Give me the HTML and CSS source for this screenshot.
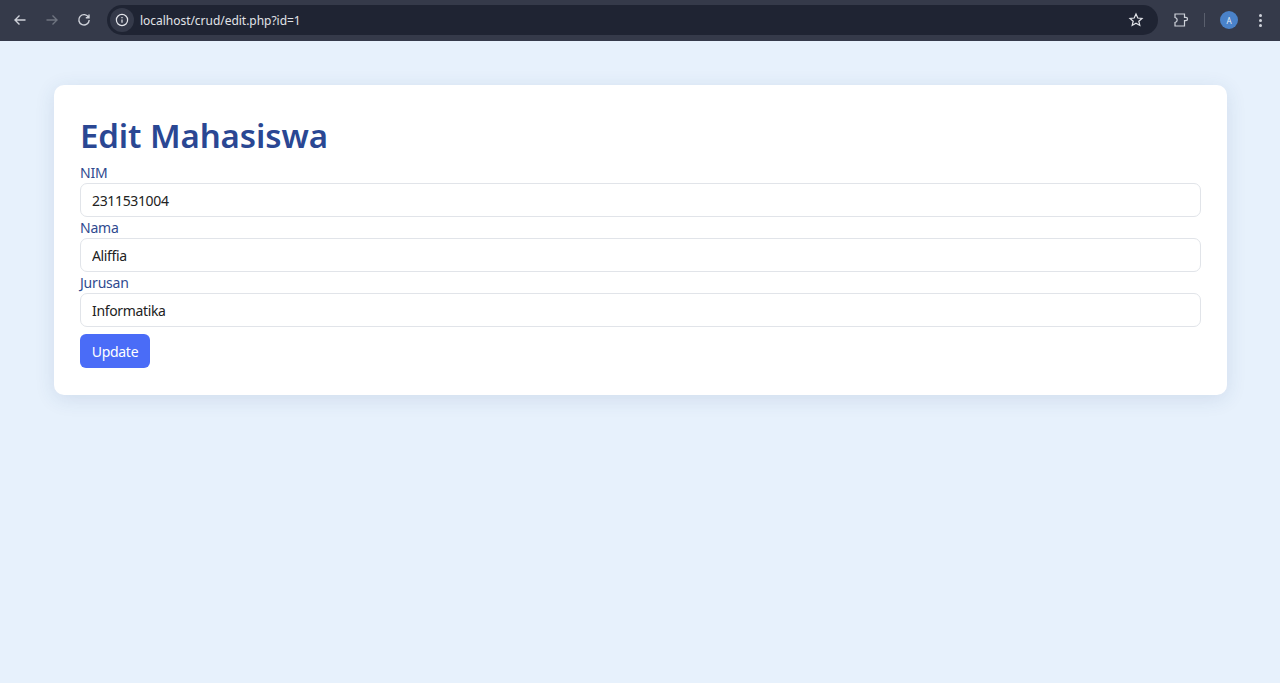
FILE: index.html
```html
<!DOCTYPE html>
<html lang="id">
<head>
<meta charset="utf-8">
<title>Edit Mahasiswa</title>
<link rel="stylesheet" href="styles.css">
</head>
<body>
<header class="toolbar">
  <div class="nav">
    <svg class="icon" viewBox="0 0 16 16"><path d="M13.500 8H3M7.500 3.500 3 8l4.500 4.500"/></svg>
    <svg class="icon dim" viewBox="0 0 16 16"><path d="M2.500 8H13M8.500 3.500 13 8l-4.500 4.500"/></svg>
    <svg class="icon" viewBox="0 0 16 16"><path d="M12.600 5.400A5.200 5.200 0 1 0 13.200 8M13 2.600v3.200H9.800"/></svg>
  </div>
  <div class="omnibox">
    <span class="site-chip">
      <svg class="info" viewBox="0 0 16 16"><circle cx="8" cy="8" r="5.600"/><path d="M8 7.400v3.400M8 5v1.200"/></svg>
    </span>
    <span class="url">localhost/crud/edit.php?id=1</span>
    <svg class="star" viewBox="0 0 16 16"><path d="m8 2 1.800 4 4.200.4-3.200 2.800 1 4.200L8 11.200l-3.800 2.200 1-4.200L2 6.400 6.200 6z"/></svg>
  </div>
  <div class="actions">
    <svg class="ext" viewBox="0 0 18 18"><path d="M3 3h9.500v3.300h1.300a1.300 1.300 0 0 1 0 3.400h-1.300V15H3v-3.500c1.500-.4 2.200-1.400 2.200-2.500S4.500 6.900 3 6.500z"/></svg>
    <span class="divider"></span>
    <span class="avatar">A</span>
    <span class="menu"><i></i><i></i><i></i></span>
  </div>
</header>
<main class="card">
  <h1 class="title">Edit Mahasiswa</h1>
  <form class="form">
    <label class="label" for="nim">NIM</label>
    <input class="field" id="nim" type="text" value="2311531004">
    <label class="label" for="nama">Nama</label>
    <input class="field" id="nama" type="text" value="Aliffia">
    <label class="label" for="jurusan">Jurusan</label>
    <input class="field" id="jurusan" type="text" value="Informatika">
    <button class="submit" type="button">Update</button>
  </form>
</main>
</body>
</html>
```
FILE: styles.css
```css
* { box-sizing: border-box; }
html, body { height: 100%; }
body {
  margin: 0;
  background: #e7f1fc;
  font-family: "Noto Sans", "Open Sans", sans-serif;
  overflow: hidden;
}
.toolbar {
  height: 41px;
  background: #353a4a;
  display: flex;
  align-items: center;
  padding: 0 11px 1px 12px;
}
.nav { display: flex; gap: 16px; width: 95px; align-items: center; }
.icon { width: 16px; height: 16px; fill: none; stroke: #cfd2da; stroke-width: 1.4; }
.icon.dim { stroke: #6f7480; }
.omnibox {
  width: 1051px;
  height: 30px;
  border-radius: 15px;
  background: #1f2433;
  display: flex;
  align-items: center;
  padding: 0 14px 0 3px;
}
.site-chip {
  width: 24px;
  height: 24px;
  border-radius: 50%;
  background: #353a4a;
  display: flex;
  align-items: center;
  justify-content: center;
}
.info { width: 16px; height: 16px; fill: none; stroke: #e4e6eb; stroke-width: 1.2; }
.url {
  flex: 1;
  margin-left: 6px;
  color: #e1e3e8;
  font-size: 12px;
  letter-spacing: -0.03px;
}
.star { width: 16px; height: 16px; fill: none; stroke: #e4e6eb; stroke-width: 1.2; }
.actions { display: flex; align-items: center; margin-left: 14px; }
.ext { width: 18px; height: 18px; fill: none; stroke: #cfd2da; stroke-width: 1.2; }
.divider { width: 1px; height: 14px; background: #5a5f6d; margin: 0 15px 0 14px; }
.avatar {
  width: 18px;
  height: 18px;
  border-radius: 50%;
  background: #4a82c9;
  color: #e8eef8;
  font-size: 8px;
  display: flex;
  align-items: center;
  justify-content: center;
}
.menu { display: flex; flex-direction: column; gap: 2px; margin-left: 21px; }
.menu i { width: 3px; height: 3px; border-radius: 50%; background: #cfd2da; }
.card {
  margin: 44px 53px 0 54px;
  height: 310px;
  padding: 26px;
  background: #fff;
  border-radius: 10px;
  box-shadow: 0 4px 20px rgba(40, 70, 120, 0.12);
}
.title {
  margin: 0;
  height: 51px;
  line-height: 50px;
  font-size: 33px;
  font-weight: 600;
  letter-spacing: -0.1px;
  color: #2a4793;
}
.form { display: flex; flex-direction: column; align-items: flex-start; }
.label {
  height: 21px;
  line-height: 21px;
  font-size: 14px;
  letter-spacing: -0.2px;
  color: #2f4a8f;
}
.field {
  width: 100%;
  height: 34px;
  padding: 1px 11px 0;
  border: 1px solid #e1e4e9;
  border-radius: 7px;
  background: #fff;
  font: inherit;
  font-size: 14px;
  letter-spacing: -0.35px;
  color: #222;
  outline: none;
}
.submit {
  margin-top: 7px;
  width: 70px;
  height: 34px;
  padding: 1px 0 0;
  border: 0;
  border-radius: 6px;
  background: #4a6cf7;
  color: #fff;
  font: inherit;
  font-size: 14px;
  letter-spacing: -0.3px;
}
```
